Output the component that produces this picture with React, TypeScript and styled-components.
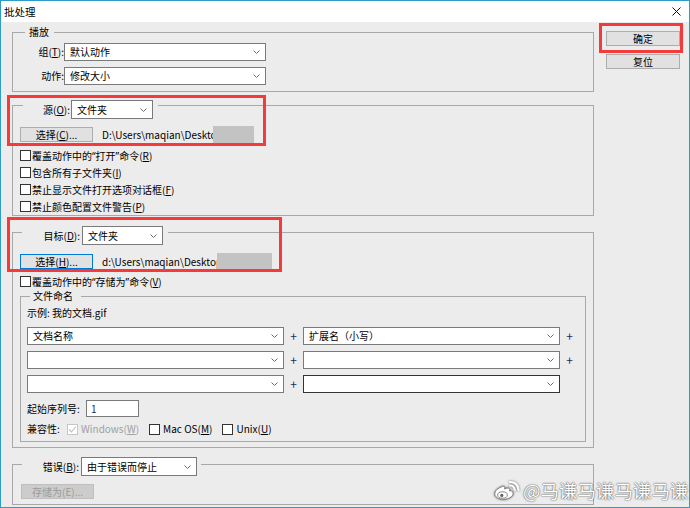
import React from "react";
import styled, { createGlobalStyle } from "styled-components";

const GlobalStyle = createGlobalStyle`
  html, body { margin: 0; padding: 0; }
  body {
    background: #ececec;
    font-family: "Noto Sans CJK SC", "Noto Sans", sans-serif;
    font-size: 10px;
    color: #000;
  }
  *, *::before, *::after { box-sizing: border-box; }
`;

const Window = styled.div`
  position: relative;
  width: 690px;
  height: 508px;
  border: 1px solid #2d9dc8;
  background: #ececec;
  display: flex;
  flex-direction: column;
  overflow: hidden;
`;

const TitleBar = styled.div`
  height: 21px;
  flex: none;
  background: #fff;
  display: flex;
  align-items: center;
  justify-content: space-between;
  padding: 0 8px 0 3px;
`;

const Title = styled.span`
  font-size: 10.5px;
  line-height: 21px;
`;

const Body = styled.div`
  flex: 1;
  display: flex;
  align-items: flex-start;
  padding: 9px 0 0 11px;
  gap: 12px;
`;

const MainColumn = styled.div`
  width: 582px;
  flex: none;
  display: flex;
  flex-direction: column;
  padding-top: 1px;
`;

const SideColumn = styled.div`
  width: 74px;
  flex: none;
  display: flex;
  flex-direction: column;
  gap: 8px;
`;

const Group = styled.section<{ $mt?: number; $pb?: number; $inner?: boolean }>`
  border: 1px solid #a8a8a8;
  margin: ${(p) => p.$mt ?? 0}px ${(p) => (p.$inner ? 7 : 0)}px 0 ${(p) => (p.$inner ? 7 : 0)}px;
  padding-bottom: ${(p) => p.$pb ?? 0}px;
  display: flex;
  flex-direction: column;
  align-items: flex-start;
  align-self: stretch;
`;

const Legend = styled.div<{ $mt: number; $ml: number; $pl?: number; $pr?: number }>`
  display: flex;
  align-items: center;
  margin: ${(p) => p.$mt}px 0 0 ${(p) => p.$ml}px;
  padding: 0 ${(p) => p.$pr ?? 0}px 0 ${(p) => p.$pl ?? 0}px;
  background: #ececec;
  line-height: 16px;
  white-space: nowrap;
`;

const Row = styled.div<{ $mt?: number; $ml?: number; $gap?: number; $h?: number }>`
  display: flex;
  align-items: center;
  margin: ${(p) => p.$mt ?? 0}px 0 0 ${(p) => p.$ml ?? 0}px;
  gap: ${(p) => p.$gap ?? 0}px;
  ${(p) => (p.$h ? `height: ${p.$h}px;` : "")}
  line-height: 16px;
  white-space: nowrap;
`;

const Label = styled.span<{ $w?: number; $right?: boolean; $mr?: number }>`
  flex: none;
  ${(p) => (p.$w ? `width: ${p.$w}px;` : "")}
  text-align: ${(p) => (p.$right ? "right" : "left")};
  margin-right: ${(p) => p.$mr ?? 0}px;
  white-space: nowrap;
`;

const Key = styled.span`
  text-decoration: underline;
  text-underline-offset: 1px;
`;

const Quote = styled.span`
  font-family: "Noto Sans", sans-serif;
`;

const SelectBox = styled.div<{ $w: number; $h?: number; $dark?: boolean; $ml?: number }>`
  flex: none;
  width: ${(p) => p.$w}px;
  height: ${(p) => p.$h ?? 18}px;
  margin-left: ${(p) => p.$ml ?? 0}px;
  background: #fff;
  border: 1px solid ${(p) => (p.$dark ? "#333" : "#7a7a7a")};
  display: flex;
  align-items: center;
  justify-content: space-between;
  padding: 0 5px;
  line-height: 14px;
`;

const Chevron = styled.svg`
  flex: none;
  width: 7px;
  height: 4px;
`;

const Select: React.FC<{ w: number; h?: number; dark?: boolean; ml?: number; children?: React.ReactNode }> = ({
  w,
  h,
  dark,
  ml,
  children,
}) => (
  <SelectBox $w={w} $h={h} $dark={dark} $ml={ml}>
    <span>{children}</span>
    <Chevron viewBox="0 0 7 4">
      <path d="M0.5 0.5 L3.5 3.5 L6.5 0.5" fill="none" stroke="#6a6a6a" strokeWidth="1" />
    </Chevron>
  </SelectBox>
);

const Btn = styled.div<{ $w: number; $focus?: boolean; $disabled?: boolean }>`
  flex: none;
  width: ${(p) => p.$w}px;
  height: 15px;
  border: 1px solid ${(p) => (p.$focus ? "#0078d7" : p.$disabled ? "#bfbfbf" : "#adadad")};
  background: ${(p) => (p.$disabled ? "#cccccc" : "#e1e1e1")};
  color: ${(p) => (p.$disabled ? "#9a9a9a" : "#000")};
  display: flex;
  align-items: center;
  justify-content: center;
  line-height: 13px;
`;

const PathText = styled.span<{ $w: number }>`
  flex: none;
  width: ${(p) => p.$w}px;
  margin-left: 9px;
  white-space: nowrap;
  overflow: visible;
`;

const Redact = styled.span<{ $w: number }>`
  position: relative;
  flex: none;
  width: ${(p) => p.$w}px;
  height: 17px;
  background: #c3c3c3;
`;

const CheckList = styled.div<{ $mt: number }>`
  display: flex;
  flex-direction: column;
  margin: ${(p) => p.$mt}px 0 0 7px;
`;

const CheckRow = styled.div`
  height: 17px;
  display: flex;
  align-items: center;
  gap: 1px;
  white-space: nowrap;
`;

const CheckItem = styled.span<{ $disabled?: boolean }>`
  display: inline-flex;
  align-items: center;
  gap: 3px;
  color: ${(p) => (p.$disabled ? "#a0a0a0" : "#000")};
`;

const Box = styled.span<{ $disabled?: boolean }>`
  flex: none;
  width: 11px;
  height: 11px;
  border: 1px solid ${(p) => (p.$disabled ? "#c6c6c6" : "#333")};
  background: #fff;
  display: inline-flex;
  align-items: center;
  justify-content: center;
`;

const Check: React.FC<{ checked?: boolean; disabled?: boolean }> = ({ checked, disabled }) => (
  <Box $disabled={disabled}>
    {checked && (
      <svg width="9" height="9" viewBox="0 0 9 9">
        <path d="M1 4.5 L3.5 7 L8 1.5" fill="none" stroke={disabled ? "#c0c0c0" : "#222"} strokeWidth="1.1" />
      </svg>
    )}
  </Box>
);

const Plus = styled.span<{ $hidden?: boolean }>`
  flex: none;
  width: 19px;
  text-align: center;
  color: #1d2a66;
  font-size: 12px;
  visibility: ${(p) => (p.$hidden ? "hidden" : "visible")};
`;

const NumberInput = styled.div`
  flex: none;
  width: 53px;
  height: 17px;
  border: 1px solid #7a7a7a;
  background: #fff;
  padding-left: 4px;
  line-height: 15px;
  color: #2a1f5a;
`;

const Highlight = styled.div<{ $x: number; $y: number; $w: number; $h: number }>`
  position: absolute;
  left: ${(p) => p.$x}px;
  top: ${(p) => p.$y}px;
  width: ${(p) => p.$w}px;
  height: ${(p) => p.$h}px;
  border: 3px solid #f43a3a;
  pointer-events: none;
`;

const Watermark = styled.div`
  position: absolute;
  left: 492px;
  top: 478px;
  display: flex;
  align-items: center;
  gap: 2px;
  color: #fff;
  font-size: 18.5px;
  line-height: 22px;
  white-space: nowrap;
  text-shadow: 0 0 1px #444, 0 0 2px rgba(0, 0, 0, 0.55);
`;

const WeiboLogo = styled.svg`
  flex: none;
  filter: drop-shadow(0 0 1px rgba(0, 0, 0, 0.6));
`;

const CloseIcon = styled.svg`
  flex: none;
`;

export default function App() {
  return (
    <>
      <GlobalStyle />
      <Window>
        <TitleBar>
          <Title>批处理</Title>
          <CloseIcon width="9" height="9" viewBox="0 0 9 9">
            <path d="M0.5 0.5 L8.5 8.5 M8.5 0.5 L0.5 8.5" stroke="#111" strokeWidth="1" />
          </CloseIcon>
        </TitleBar>
        <Body>
          <MainColumn>
            <Group $pb={6}>
              <Legend $mt={-9} $ml={12} $pl={4} $pr={5}>
                播放
              </Legend>
              <Row $mt={3}>
                <Label $w={51} $right>
                  组(<Key>T</Key>):
                </Label>
                <Select w={202}>默认动作</Select>
              </Row>
              <Row $mt={6}>
                <Label $w={51} $right>
                  动作:
                </Label>
                <Select w={202}>修改大小</Select>
              </Row>
            </Group>

            <Group $mt={13}>
              <Legend $mt={-6} $ml={10} $pr={5}>
                <Label $w={47} $right>
                  源(<Key>O</Key>):
                </Label>
                <Select w={82} h={19} ml={1}>
                  文件夹
                </Select>
              </Legend>
              <Row $mt={7} $ml={7}>
                <Btn $w={73}>
                  <span>
                    选择(<Key>C</Key>)...
                  </span>
                </Btn>
                <PathText $w={111}>D:\Users\maqian\Desktop</PathText>
                <Redact $w={41} />
              </Row>
              <CheckList $mt={4}>
                <CheckRow>
                  <Check />
                  <span>
                    覆盖动作中的<Quote>“</Quote>打开<Quote>”</Quote>命令(<Key>R</Key>)
                  </span>
                </CheckRow>
                <CheckRow>
                  <Check />
                  <span>
                    包含所有子文件夹(<Key>I</Key>)
                  </span>
                </CheckRow>
                <CheckRow>
                  <Check />
                  <span>
                    禁止显示文件打开选项对话框(<Key>F</Key>)
                  </span>
                </CheckRow>
                <CheckRow>
                  <Check />
                  <span>
                    禁止颜色配置文件警告(<Key>P</Key>)
                  </span>
                </CheckRow>
              </CheckList>
            </Group>

            <Group $mt={16} $pb={5}>
              <Legend $mt={-7} $ml={9} $pr={5}>
                <Label $w={58} $right>
                  目标(<Key>D</Key>):
                </Label>
                <Select w={81} h={19} ml={2}>
                  文件夹
                </Select>
              </Legend>
              <Row $mt={8} $ml={7}>
                <Btn $w={73} $focus>
                  <span>
                    选择(<Key>H</Key>)...
                  </span>
                </Btn>
                <PathText $w={115}>d:\Users\maqian\Desktop\</PathText>
                <Redact $w={55} />
              </Row>
              <CheckList $mt={3}>
                <CheckRow>
                  <Check />
                  <span>
                    覆盖动作中的<Quote>“</Quote>存储为<Quote>”</Quote>命令(<Key>V</Key>)
                  </span>
                </CheckRow>
              </CheckList>

              <Group $mt={6} $pb={4} $inner>
                <Legend $mt={-9} $ml={9} $pl={3} $pr={8}>
                  文件命名
                </Legend>
                <Row $mt={1} $ml={6}>
                  示例: 我的文档.gif
                </Row>
                <Row $mt={6} $ml={6}>
                  <Select w={257}>文档名称</Select>
                  <Plus>+</Plus>
                  <Select w={257}>扩展名（小写）</Select>
                  <Plus>+</Plus>
                </Row>
                <Row $mt={6} $ml={6}>
                  <Select w={257} />
                  <Plus>+</Plus>
                  <Select w={257} />
                  <Plus>+</Plus>
                </Row>
                <Row $mt={6} $ml={6}>
                  <Select w={257} />
                  <Plus>+</Plus>
                  <Select w={257} dark />
                  <Plus $hidden>+</Plus>
                </Row>
                <Row $mt={7} $ml={6}>
                  <Label $w={59}>起始序列号:</Label>
                  <NumberInput>1</NumberInput>
                </Row>
                <Row $mt={4} $ml={6} $h={16} $gap={10}>
                  <Label $w={30}>兼容性:</Label>
                  <CheckItem $disabled>
                    <Check checked disabled />
                    <span>
                      Windows(<Key>W</Key>)
                    </span>
                  </CheckItem>
                  <CheckItem>
                    <Check />
                    <span>
                      Mac OS(<Key>M</Key>)
                    </span>
                  </CheckItem>
                  <CheckItem>
                    <Check />
                    <span>
                      Unix(<Key>U</Key>)
                    </span>
                  </CheckItem>
                </Row>
              </Group>
            </Group>

            <Group $mt={16} $pb={5}>
              <Legend $mt={-8} $ml={9} $pr={4}>
                <Label $w={57} $right>
                  错误(<Key>B</Key>):
                </Label>
                <Select w={116} h={19} ml={2}>
                  由于错误而停止
                </Select>
              </Legend>
              <Row $mt={8} $ml={8}>
                <Btn $w={73} $disabled>
                  存储为(E)...
                </Btn>
              </Row>
            </Group>
          </MainColumn>

          <SideColumn>
            <Btn $w={74}>确定</Btn>
            <Btn $w={74}>复位</Btn>
          </SideColumn>
        </Body>

        <Highlight $x={6} $y={94} $w={259} $h={51} />
        <Highlight $x={6} $y={216} $w={275} $h={55} />
        <Highlight $x={598} $y={22} $w={84} $h={30} />

        <Watermark>
          <WeiboLogo width="28" height="21" viewBox="0 0 28 21">
            <path
              d="M9.5 6.5 C5 8 1.5 11 1.8 14.2 C2.2 18.3 8 20 12.8 19.1 C17.5 18.2 20.6 15.6 20.1 13 C19.7 11 17.8 10.6 16.6 11 C17.2 9 16.5 7.6 14 8.1 L11.6 9 C12.2 7 11.5 5.6 9.5 6.5 Z"
              fill="#fff"
              stroke="#7a7a7a"
              strokeWidth="0.9"
            />
            <ellipse cx="9.5" cy="15" rx="4.8" ry="3.2" fill="#fff" stroke="#777" strokeWidth="0.9" />
            <circle cx="8.8" cy="15.4" r="1.6" fill="#666" />
            <path d="M17 2 A8 8 0 0 1 25.5 10" fill="none" stroke="#fff" strokeWidth="2.2" strokeLinecap="round" />
            <path d="M17 5.6 A4.4 4.4 0 0 1 21.8 10" fill="none" stroke="#fff" strokeWidth="2" strokeLinecap="round" />
          </WeiboLogo>
          <span>@马谦马谦马谦马谦</span>
        </Watermark>
      </Window>
    </>
  );
}
